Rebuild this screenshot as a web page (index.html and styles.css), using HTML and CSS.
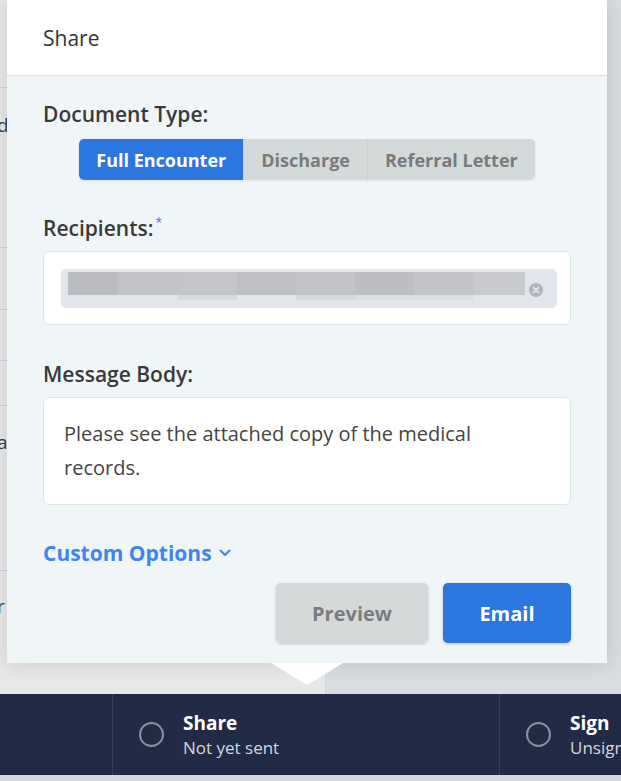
FILE: index.html
```html
<!DOCTYPE html>
<html lang="en">

<head>
    <meta charset="UTF-8">
    <meta name="viewport" content="width=device-width, initial-scale=1.0">
    <title>Share</title>
    <link rel="stylesheet" href="styles.css">
</head>

<body>

    <div class="backdrop">
        <div class="workspace">
            <div class="list-panel">
                <div class="list-row row-a"></div>
                <div class="list-row row-b"><span>d</span></div>
                <div class="list-row row-c"></div>
                <div class="list-row row-d"></div>
                <div class="list-row row-e"></div>
                <div class="list-row row-f"><span>a</span></div>
                <div class="list-row row-g"><span>r</span></div>
            </div>
            <div class="main-panel"></div>
        </div>

        <div class="status-bar">
            <div class="status-cell cell-first"></div>
            <div class="status-cell cell-share">
                <span class="status-ring"></span>
                <div class="status-text">
                    <div class="status-title">Share</div>
                    <div class="status-sub">Not yet sent</div>
                </div>
            </div>
            <div class="status-cell cell-sign">
                <span class="status-ring"></span>
                <div class="status-text">
                    <div class="status-title">Sign</div>
                    <div class="status-sub">Unsigned</div>
                </div>
            </div>
        </div>
    </div>

    <div class="share-popover">
        <div class="popover-header">Share</div>

        <form class="popover-body">
            <label class="field-label">Document Type:</label>
            <div class="segmented">
                <button type="button" class="segment active">Full Encounter</button>
                <button type="button" class="segment">Discharge</button>
                <button type="button" class="segment">Referral Letter</button>
            </div>

            <label class="field-label">Recipients:<span class="required">*</span></label>
            <div class="recipients-box">
                <div class="recipient-chip">
                    <div class="redacted">
                        <div class="redacted-band"></div>
                        <div class="redacted-tail"></div>
                    </div>
                    <svg class="chip-remove" width="14" height="14" viewBox="0 0 14 14">
                        <circle cx="7" cy="7" r="7" fill="#b1b4b9" />
                        <path d="M4.5 4.5 L9.5 9.5 M9.5 4.5 L4.5 9.5" stroke="#e1e5ec" stroke-width="1.8" stroke-linecap="round" />
                    </svg>
                </div>
            </div>

            <label class="field-label">Message Body:</label>
            <div class="message-box">Please see the attached copy of the medical records.</div>

            <a class="custom-options" href="#">Custom Options
                <svg width="12" height="8" viewBox="0 0 12 8">
                    <path d="M1.5 1.5 L6 6 L10.5 1.5" fill="none" stroke="#3d85ef" stroke-width="2" stroke-linecap="round" stroke-linejoin="round" />
                </svg>
            </a>

            <div class="actions">
                <button type="button" class="btn btn-preview">Preview</button>
                <button type="submit" class="btn btn-email">Email</button>
            </div>
        </form>

        <div class="popover-arrow"></div>
    </div>

</body>

</html>
```

FILE: styles.css
```css
body,
html {
    margin: 0;
    height: 100%;
    overflow: hidden;
    font-family: 'Open Sans', 'Noto Sans', sans-serif;
}

body {
    position: relative;
    background-color: #d6d9dc;
}

button {
    font-family: inherit;
}

/* page behind the popover */

.backdrop {
    display: flex;
    flex-direction: column;
    height: 775px;
}

.workspace {
    display: flex;
    height: 694px;
}

.list-panel {
    width: 325px;
    background-color: #e7e7e7;
    display: flex;
    flex-direction: column;
}

.list-row {
    border-bottom: 1px solid #cfd0d1;
    font-size: 19px;
    line-height: 24px;
    color: #2f3e4e;
    box-sizing: border-box;
}

.list-row span {
    display: inline-block;
    margin-left: -3px;
}

.row-a { height: 88px; }
.row-b { height: 160px; padding-top: 25px; }
.row-c { height: 62px; }
.row-d { height: 51px; }
.row-e { height: 45px; }
.row-f { height: 165px; padding-top: 24px; }
.row-g { height: 70px; padding-top: 23px; border-bottom: none; }

.main-panel {
    flex: 1;
    background-color: #d9dcde;
    border-left: 1px solid #d2d5d7;
}

.status-bar {
    display: flex;
    height: 81px;
    background-color: #222b46;
    color: #fff;
}

.status-cell {
    display: flex;
    align-items: center;
    flex-shrink: 0;
    box-sizing: border-box;
    border-right: 1px solid #364059;
}

.cell-first {
    width: 113px;
}

.cell-share {
    width: 387px;
    padding-left: 26px;
}

.cell-sign {
    flex: 1;
    min-width: 0;
    overflow: hidden;
    padding-left: 26px;
    border-right: none;
}

.status-ring {
    width: 21px;
    height: 21px;
    border: 2.5px solid #8c909c;
    border-radius: 50%;
    margin-right: 19px;
    flex-shrink: 0;
}

.status-title {
    font-size: 19px;
    font-weight: 700;
    line-height: 26px;
}

.status-sub {
    font-size: 17px;
    color: #d3d6dd;
    line-height: 24px;
    white-space: nowrap;
}

/* popover */

.share-popover {
    position: absolute;
    left: 7px;
    top: 0;
    width: 600px;
    background-color: #f0f5f8;
    box-shadow: 0 0 18px rgba(0, 0, 0, 0.12);
}

.popover-header {
    height: 75px;
    background-color: #fff;
    border-bottom: 1px solid #dde1e4;
    display: flex;
    align-items: center;
    padding-left: 36px;
    font-size: 21px;
    font-weight: 500;
    color: #333;
}

.popover-body {
    display: flex;
    flex-direction: column;
    padding: 25px 36px 20px;
    margin: 0;
}

.field-label {
    font-size: 21px;
    font-weight: 600;
    color: #3a3a3a;
    line-height: 26px;
}

.required {
    color: #4a72d8;
    font-size: 12px;
    font-weight: 400;
    vertical-align: top;
    line-height: 16px;
    margin-left: 2px;
}

.segmented {
    display: flex;
    align-self: center;
    margin: 12px 0 35px;
    border-radius: 5px;
    overflow: hidden;
    box-shadow: 0 1px 3px rgba(0, 0, 0, 0.08);
}

.segment {
    border: none;
    height: 41px;
    padding: 0 17px;
    font-size: 18px;
    font-weight: 700;
    color: #797b7c;
    background-color: #d4d9da;
    border-left: 1px solid #ccd1d2;
}

.segment.active {
    background-color: #2c76e0;
    color: #fff;
    border-left: none;
}

.recipients-box {
    margin: 10px 0 36px;
    height: 74px;
    background-color: #fff;
    border: 1px solid #e1e4e6;
    border-radius: 6px;
    padding: 17px 13px 0 17px;
    box-sizing: border-box;
}

.recipient-chip {
    height: 39px;
    background-color: #e1e5ec;
    border-radius: 5px;
    display: flex;
    align-items: flex-start;
    padding: 3px 8px 0 7px;
    box-sizing: border-box;
}

.redacted {
    width: 457px;
}

.redacted-band {
    height: 23px;
    background: linear-gradient(to right,
            #b9bbbe 0, #b9bbbe 50px,
            #c1c3c6 50px, #c1c3c6 110px,
            #c3c5c8 110px, #c3c5c8 169px,
            #bdbfc2 169px, #bdbfc2 228px,
            #c1c3c6 228px, #c1c3c6 287px,
            #bcbec1 287px, #bcbec1 346px,
            #c2c4c7 346px, #c2c4c7 405px,
            #c8cacd 405px);
}

.redacted-tail {
    height: 5px;
    margin-left: 110px;
    width: 295px;
    background: linear-gradient(to right,
            #d6d9df 0, #d6d9df 59px,
            transparent 59px, transparent 118px,
            #d4d8de 118px, #d4d8de 177px,
            #dadde3 177px);
}

.chip-remove {
    margin: 11px 0 0 4px;
}

.message-box {
    margin-top: 10px;
    height: 108px;
    background-color: #fff;
    border: 1px solid #e1e4e6;
    border-radius: 6px;
    box-sizing: border-box;
    padding: 19px 40px 0 20px;
    font-size: 20px;
    line-height: 34px;
    color: #444;
}

.custom-options {
    margin-top: 35px;
    line-height: 26px;
    align-self: flex-start;
    display: flex;
    align-items: center;
    gap: 7px;
    font-size: 21px;
    font-weight: 700;
    color: #3d85ef;
    text-decoration: none;
}

.actions {
    display: flex;
    justify-content: flex-end;
    gap: 15px;
    margin-top: 17px;
}

.btn {
    height: 60px;
    border: none;
    border-radius: 5px;
    font-size: 20px;
    font-weight: 700;
    box-shadow: 0 1px 3px rgba(0, 0, 0, 0.2);
}

.btn-preview {
    width: 152px;
    background-color: #d4d9da;
    color: #7a7c7d;
}

.btn-email {
    width: 128px;
    background-color: #2c76e0;
    color: #fff;
}

.popover-arrow {
    position: absolute;
    left: 264px;
    bottom: -22px;
    width: 0;
    height: 0;
    border-left: 36px solid transparent;
    border-right: 36px solid transparent;
    border-top: 22px solid #fff;
}
```
